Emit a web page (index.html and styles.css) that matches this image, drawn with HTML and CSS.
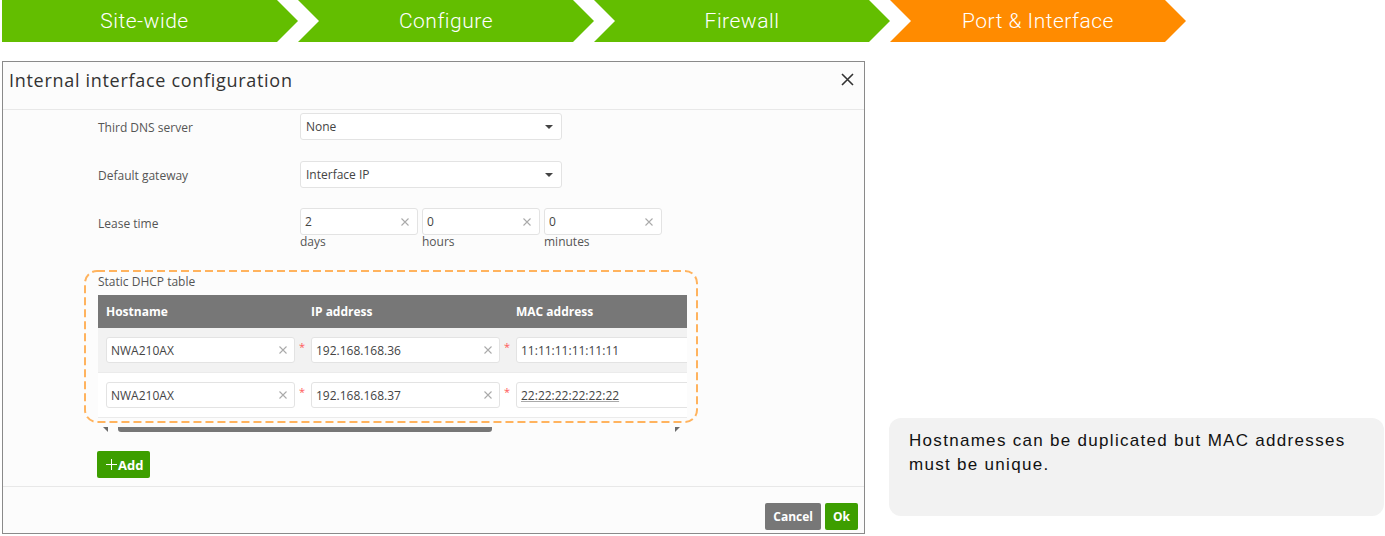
FILE: index.html
```html
<!DOCTYPE html>
<html lang="en">
<head>
    <meta charset="UTF-8">
    <meta name="viewport" content="width=device-width, initial-scale=1.0">
    <title>Internal interface configuration</title>
    <link rel="stylesheet" href="styles.css">
</head>
<body>
    <div class="steps">
        <div class="step first">Site-wide</div>
        <div class="step">Configure</div>
        <div class="step">Firewall</div>
        <div class="step current">Port &amp; Interface</div>
    </div>

    <div class="main">
        <div class="dialog">
            <div class="dialog-header">
                <h2>Internal interface configuration</h2>
                <button class="close" type="button">
                    <svg width="13" height="13" viewBox="0 0 13 13"><path d="M1 1L12 12M12 1L1 12" stroke="#333" stroke-width="1.6" fill="none"/></svg>
                </button>
            </div>

            <div class="dialog-body">
                <div class="form-row">
                    <label>Third DNS server</label>
                    <div class="select"><span>None</span><i class="caret"></i></div>
                </div>

                <div class="form-row">
                    <label>Default gateway</label>
                    <div class="select"><span>Interface IP</span><i class="caret"></i></div>
                </div>

                <div class="form-row lease">
                    <label>Lease time</label>
                    <div class="lease-fields">
                        <div class="unit">
                            <div class="field"><input type="text" value="2"><svg class="clear" width="8" height="8" viewBox="0 0 8 8"><path d="M0.5 0.5L7.5 7.5M7.5 0.5L0.5 7.5"/></svg></div>
                            <span class="unit-label">days</span>
                        </div>
                        <div class="unit">
                            <div class="field"><input type="text" value="0"><svg class="clear" width="8" height="8" viewBox="0 0 8 8"><path d="M0.5 0.5L7.5 7.5M7.5 0.5L0.5 7.5"/></svg></div>
                            <span class="unit-label">hours</span>
                        </div>
                        <div class="unit">
                            <div class="field"><input type="text" value="0"><svg class="clear" width="8" height="8" viewBox="0 0 8 8"><path d="M0.5 0.5L7.5 7.5M7.5 0.5L0.5 7.5"/></svg></div>
                            <span class="unit-label">minutes</span>
                        </div>
                    </div>
                </div>

                <div class="dhcp">
                    <!-- highlight around the table -->
                    <svg class="highlight" width="614" height="153" viewBox="0 0 614 153"><rect x="1" y="1" width="612" height="151" rx="12" ry="12"/></svg>

                    <div class="dhcp-title">Static DHCP table</div>
                    <div class="table-wrap">
                        <table>
                            <thead>
                                <tr><th>Hostname</th><th>IP address</th><th>MAC address</th></tr>
                            </thead>
                            <tbody>
                                <tr class="alt">
                                    <td><div class="cell"><div class="field"><input type="text" value="NWA210AX"><svg class="clear" width="8" height="8" viewBox="0 0 8 8"><path d="M0.5 0.5L7.5 7.5M7.5 0.5L0.5 7.5"/></svg></div><span class="req">*</span></div></td>
                                    <td><div class="cell"><div class="field"><input type="text" value="192.168.168.36"><svg class="clear" width="8" height="8" viewBox="0 0 8 8"><path d="M0.5 0.5L7.5 7.5M7.5 0.5L0.5 7.5"/></svg></div><span class="req">*</span></div></td>
                                    <td><div class="cell"><div class="field wide"><input type="text" value="11:11:11:11:11:11"></div></div></td>
                                </tr>
                                <tr>
                                    <td><div class="cell"><div class="field"><input type="text" value="NWA210AX"><svg class="clear" width="8" height="8" viewBox="0 0 8 8"><path d="M0.5 0.5L7.5 7.5M7.5 0.5L0.5 7.5"/></svg></div><span class="req">*</span></div></td>
                                    <td><div class="cell"><div class="field"><input type="text" value="192.168.168.37"><svg class="clear" width="8" height="8" viewBox="0 0 8 8"><path d="M0.5 0.5L7.5 7.5M7.5 0.5L0.5 7.5"/></svg></div><span class="req">*</span></div></td>
                                    <td><div class="cell"><div class="field wide"><input type="text" class="marked" value="22:22:22:22:22:22"></div></div></td>
                                </tr>
                            </tbody>
                        </table>
                    </div>
                    <div class="hscroll">
                        <i class="arr left"></i>
                        <span class="thumb"></span>
                        <i class="arr right"></i>
                    </div>
                </div>

                <button class="btn add" type="button">
                    <svg width="11" height="11" viewBox="0 0 11 11"><path d="M5.5 0V11M0 5.5H11" stroke="#fff" stroke-width="1" fill="none"/></svg>Add
                </button>
            </div>

            <div class="dialog-footer">
                <button class="btn cancel" type="button">Cancel</button>
                <button class="btn ok" type="button">Ok</button>
            </div>
        </div>

        <div class="note">Hostnames can be duplicated but MAC addresses must be unique.</div>
    </div>
</body>
</html>
```

FILE: styles.css
```css
* {
    box-sizing: border-box;
}
body {
    margin: 0;
    font-family: "Open Sans", sans-serif;
    background-color: #fff;
}

/* wizard steps */
.steps {
    display: flex;
    height: 42px;
    padding-left: 2px;
}
.step {
    width: 296px;
    display: flex;
    align-items: center;
    justify-content: center;
    padding: 0 21px;
    background-color: #63be00;
    color: #fff;
    font-family: Roboto, sans-serif;
    font-weight: 300;
    font-size: 21px;
    letter-spacing: 0.5px;
    clip-path: polygon(0 0, calc(100% - 21px) 0, 100% 50%, calc(100% - 21px) 100%, 0 100%, 21px 50%);
}
.step.first {
    padding-left: 10px;
    clip-path: polygon(0 0, calc(100% - 21px) 0, 100% 50%, calc(100% - 21px) 100%, 0 100%);
}
.step.current {
    background-color: #ff8b00;
}

.main {
    display: flex;
    align-items: flex-end;
    margin-top: 19px;
    padding-left: 2px;
}

/* dialog */
.dialog {
    width: 863px;
    height: 473px;
    border: 1px solid #8a8a8a;
    background-color: #fcfcfc;
    display: flex;
    flex-direction: column;
}
.dialog-header {
    height: 48px;
    flex: none;
    display: flex;
    justify-content: space-between;
    align-items: flex-start;
    padding: 6px 10px 0 6px;
    border-bottom: 1px solid #e8e8e8;
}
.dialog-header h2 {
    margin: 0;
    font-size: 18px;
    font-weight: 400;
    line-height: 24px;
    letter-spacing: 0.7px;
    color: #333;
}
.close {
    border: none;
    background: none;
    padding: 0;
    margin-top: 5px;
    display: flex;
}
.dialog-body {
    flex: 1;
    padding: 3px 0 0 95px;
}
.form-row {
    display: flex;
    align-items: flex-start;
    margin-bottom: 21px;
}
.form-row:nth-child(2) {
    margin-bottom: 20px;
}
.form-row.lease {
    margin-bottom: 0;
}
.form-row label {
    width: 202px;
    height: 27px;
    padding-top: 2px;
    line-height: 25px;
    font-size: 12px;
    color: #555;
}
.form-row.lease label {
    padding-top: 3px;
}
.select {
    width: 262px;
    height: 27px;
    display: flex;
    align-items: center;
    justify-content: space-between;
    padding: 0 8px 0 5px;
    border: 1px solid #e3e3e3;
    border-radius: 3px;
    background-color: #fff;
    font-size: 12px;
    color: #444;
}
.caret {
    border-left: 4px solid transparent;
    border-right: 4px solid transparent;
    border-top: 4px solid #444;
}
.lease-fields {
    display: flex;
    gap: 4px;
}
.unit {
    width: 118px;
}
.field {
    height: 27px;
    display: flex;
    align-items: center;
    padding: 0 8px 0 4px;
    border: 1px solid #e3e3e3;
    border-radius: 3px;
    background-color: #fff;
}
.field input {
    flex: 1;
    min-width: 0;
    border: none;
    outline: none;
    background: transparent;
    padding: 0;
    font-family: inherit;
    font-size: 12px;
    color: #444;
}
.clear {
    flex: none;
    stroke: #aaa;
    stroke-width: 1.1;
    fill: none;
}
.unit-label {
    display: block;
    line-height: 14px;
    font-size: 12px;
    color: #555;
}

/* static dhcp table */
.dhcp {
    position: relative;
    width: 589px;
    margin-top: 23px;
}
.highlight {
    position: absolute;
    left: -14px;
    top: -2px;
    pointer-events: none;
}
.highlight rect {
    fill: none;
    stroke: #ffb35e;
    stroke-width: 2;
    stroke-dasharray: 8 4;
}
.dhcp-title {
    font-size: 12px;
    line-height: 16px;
    color: #555;
    padding-top: 2px;
    margin-bottom: 5px;
}
.table-wrap {
    width: 589px;
    overflow: hidden;
}
table {
    width: 615px;
    border-collapse: collapse;
    table-layout: fixed;
}
th {
    height: 33px;
    padding: 0 8px;
    background-color: #777;
    color: #fff;
    font-size: 12px;
    font-weight: 700;
    text-align: left;
}
td {
    padding: 9px 8px;
    background-color: #fff;
    border-bottom: 1px solid #ebebeb;
}
tr.alt td {
    background-color: #f2f2f2;
}
.cell {
    display: flex;
    align-items: flex-start;
}
.cell .field {
    width: 189px;
    height: 26px;
    flex: none;
    padding-right: 7px;
}
.cell .field.wide {
    width: 200px;
}
.marked {
    text-decoration: underline;
    text-decoration-color: #aaa;
}
.req {
    color: #ff5a5a;
    font-size: 11px;
    line-height: 11px;
    margin: 4px 0 0 4px;
}
.hscroll {
    display: flex;
    align-items: flex-start;
    height: 6px;
    margin-top: 9px;
    padding-left: 5px;
}
.arr {
    width: 0;
    height: 0;
}
.arr.left {
    border-top: 5px solid #6a6a6a;
    border-left: 5px solid transparent;
}
.arr.right {
    margin-left: 183px;
    border-top: 5px solid #6a6a6a;
    border-right: 5px solid transparent;
}
.thumb {
    width: 374px;
    height: 5px;
    margin-left: 10px;
    background-color: #777;
    border-radius: 0 0 3px 3px;
}

/* buttons */
.btn {
    height: 27px;
    padding: 0 8px;
    border: none;
    border-radius: 2px;
    color: #fff;
    font-family: "Open Sans", sans-serif;
    font-size: 12px;
    font-weight: 700;
}
.add {
    display: flex;
    align-items: center;
    gap: 1px;
    width: 53px;
    margin: 18px 0 0 -1px;
    padding: 0 0 0 9px;
    font-size: 13px;
    background-color: #3d9e00;
}
.dialog-footer {
    height: 47px;
    flex: none;
    display: flex;
    justify-content: flex-end;
    align-items: flex-start;
    gap: 4px;
    padding: 16px 6px 0 0;
    border-top: 1px solid #e8e8e8;
}
.cancel {
    background-color: #777;
}
.ok {
    background-color: #3d9e00;
}

/* side note */
.note {
    width: 495px;
    height: 98px;
    margin: 0 0 18px 24px;
    padding: 11px 30px 0 20px;
    background-color: #f2f2f2;
    border-radius: 12px;
    font-family: "Liberation Sans", Arial, sans-serif;
    font-size: 17px;
    line-height: 24px;
    letter-spacing: 1.3px;
    color: #111;
}
```
